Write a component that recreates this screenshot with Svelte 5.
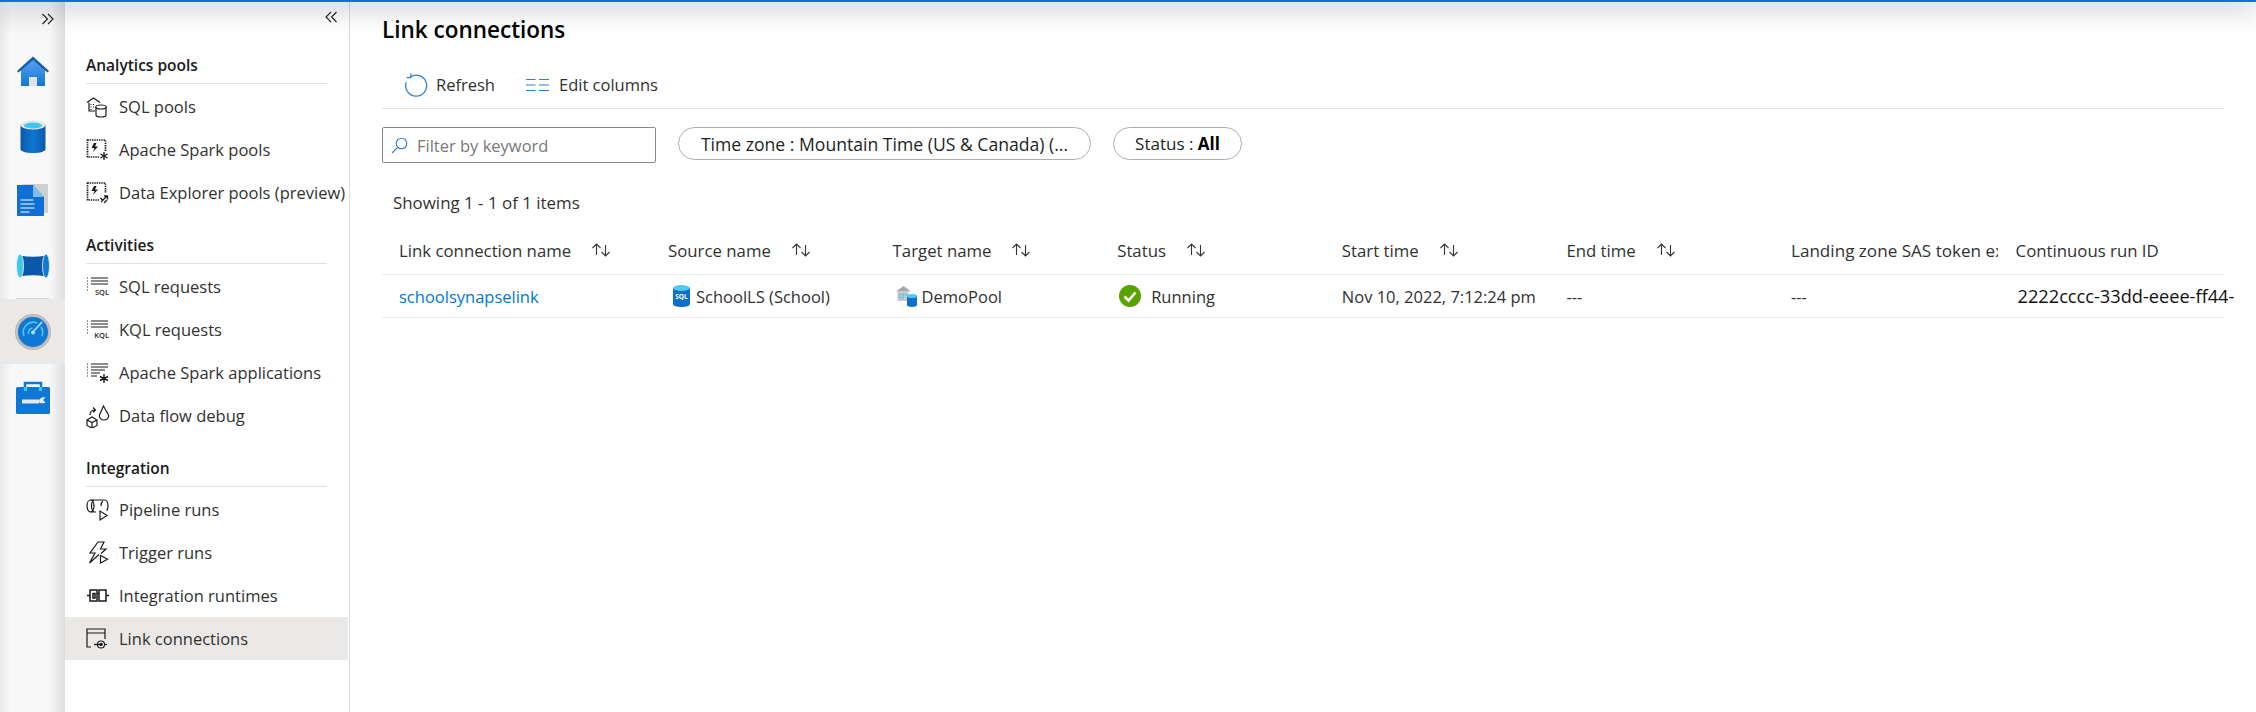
<script>
  const railIcons = ["home", "data", "doc", "pipe", "monitor", "tools"];

  const sections = [
    {
      title: "Analytics pools",
      items: [
        { label: "SQL pools", icon: "sqlpool" },
        { label: "Apache Spark pools", icon: "spark" },
        { label: "Data Explorer pools (preview)", icon: "explorer" }
      ]
    },
    {
      title: "Activities",
      items: [
        { label: "SQL requests", icon: "sqlreq" },
        { label: "KQL requests", icon: "kqlreq" },
        { label: "Apache Spark applications", icon: "sparkapp" },
        { label: "Data flow debug", icon: "dataflow" }
      ]
    },
    {
      title: "Integration",
      items: [
        { label: "Pipeline runs", icon: "piperun" },
        { label: "Trigger runs", icon: "trigger" },
        { label: "Integration runtimes", icon: "runtime" },
        { label: "Link connections", icon: "link", active: true }
      ]
    }
  ];

  const columns = [
    { name: "Link connection name", sort: true },
    { name: "Source name", sort: true },
    { name: "Target name", sort: true },
    { name: "Status", sort: true },
    { name: "Start time", sort: true },
    { name: "End time", sort: true },
    { name: "Landing zone SAS token expiry" },
    { name: "Continuous run ID" }
  ];
</script>

{#snippet navIcon(name)}
  <svg class="nav-icon" width="24" height="24" viewBox="0 0 24 24" fill="none" stroke="#1a1a1a" stroke-width="1.200">
    {#if name === "sqlpool"}
      <path d="M1 7.500 7.500 3l6.500 4.500M3 7.500V16h6" />
      <path d="M4.500 9.500h1M7 9.500h1M4.500 12h1M7 12h1M4.500 14.500h1" stroke-dasharray="1 1" />
      <path d="M10 12v8c0 1.200 2.400 2 5 2s5-.8 5-2v-8" fill="#fff" />
      <ellipse cx="15" cy="12" rx="5.200" ry="2" fill="#fff" />
    {:else if name === "spark" || name === "explorer"}
      <rect x="1.500" y="2" width="18" height="17" stroke-dasharray="1.400 .9" stroke-width="1.700" />
      <path d="M8 5l-2.500 5h3L7 14l5-5.500H9l1.500-3.500z" fill="#1a1a1a" stroke="none" />
      {#if name === "spark"}
        <rect x="14" y="13" width="9" height="10" fill="#fff" stroke="none" />
        <path d="M18 14v8M14.500 16l7 4M21.500 16l-7 4" stroke-width="1.300" />
      {:else}
        <rect x="13" y="12" width="10" height="11" fill="#fff" stroke="none" />
        <path d="M15 21l6-6M18 15h3.500v3.500M14.500 17l2.500 2.500M18 22l3-3" stroke-width="1.300" />
      {/if}
    {:else if name === "sqlreq" || name === "kqlreq"}
      <path d="M1 3h1M1 6h1M1 9h1M1 12h1M1 15h1" />
      <path d="M5 3h17M5 6h17M5 9h17" />
      <text x="23" y="20" text-anchor="end" class="mini">{name === "sqlreq" ? "SQL" : "KQL"}</text>
    {:else if name === "sparkapp"}
      <path d="M1 3h1M1 6h1M1 9h1M1 12h1M1 15h1" />
      <path d="M5 3h17M5 6h17M5 9h14M5 12h9M5 15h6" />
      <path d="M18 13v9M14 15.500l8 4M22 15.500l-8 4" stroke-width="1.400" />
    {:else if name === "dataflow"}
      <path d="M1 16l5-3 5 3v5.500L6 24l-5-2.500zM1 16l5 2.500L11 16M6 18.500V24" />
      <path d="M17.500 2l-4 9c-1 3 2 5 4.500 5s5.500-2 4.500-5z" />
      <path d="M4 11c0-3 2-5 5-5M7 3.500 9.500 6 7 8.500" />
    {:else if name === "piperun"}
      <ellipse cx="4.500" cy="8" rx="3.500" ry="6" />
      <path d="M4.500 2h14c2 0 3.500 2.500 3.500 6 0 2-.5 3.500-1.500 4.500M4.500 14H10M8 2c-2 1-2.500 3-2.500 6s1 5 2.500 6" />
      <path d="M17 3c-1.500 1-2 3-2 5M14 13v9l7-4.500z" fill="#fff" />
    {:else if name === "trigger"}
      <path d="M12 1 4 12h5L3.500 22 13 13.500" />
      <path d="M12 1h6l-3.500 7H20L15 12.500" />
      <path d="M14.500 14.500v7.500l7-3.700z" fill="#fff" />
    {:else if name === "runtime"}
      <path d="M1 11.500h3M20 11.500h3" stroke-width="1.500" />
      <path d="M4 7v10h7V9.500h2V17h7V6h-7v3M11 9.500V6H4v1M7 9.500h2V14H7z" stroke-width="1.500" />
    {:else}
      <path d="M1 2h18v4H1zM1 6v14h4M19 6v6" />
      <path d="M8 17.500h13" />
      <circle cx="15" cy="17.500" r="3.500" fill="#fff" />
      <circle cx="15" cy="17.500" r="1.200" fill="#1a1a1a" />
      <path d="M8 17.500h6" />
    {/if}
  </svg>
{/snippet}

{#snippet railIcon(name)}
  <svg width="36" height="36" viewBox="0 0 36 36">
    {#if name === "home"}
      <defs>
        <linearGradient id="homeFill" x1="0" y1="0" x2="0" y2="1">
          <stop offset="0" stop-color="#5ea0ef" /><stop offset="1" stop-color="#0f78d4" />
        </linearGradient>
      </defs>
      <path d="M6 16.500 18 6l12 10.500V33H6z" fill="url(#homeFill)" />
      <path d="M2 18 18 3.500 34 18l-1.500 1.500L18 7 3.500 19.500z" fill="#0f5fa8" />
      <rect x="14" y="24" width="8" height="9" fill="#dfe3e8" />
    {:else if name === "data"}
      <defs>
        <linearGradient id="dbFill" x1="0" y1="0" x2="1" y2="0">
          <stop offset="0" stop-color="#0b58a8" /><stop offset=".5" stop-color="#0f78d4" /><stop offset="1" stop-color="#0b58a8" />
        </linearGradient>
      </defs>
      <path d="M5.500 7v24c0 2.500 5.500 4 12.500 4s12.500-1.500 12.500-4V7z" fill="url(#dbFill)" />
      <ellipse cx="18" cy="7" rx="12.500" ry="4.500" fill="#e4e6e8" />
      <ellipse cx="18" cy="7.500" rx="9" ry="3" fill="#3fc6ec" />
    {:else if name === "doc"}
      <rect x="7" y="1" width="26" height="29" fill="#d0d0d0" />
      <path d="M2 2h16l11 12v19H2z" fill="#0f6fd8" />
      <path d="M18 2l11 12H18z" fill="#83bdf3" />
      <path d="M5.500 17h13M5.500 21h14M5.500 25h14M5.500 29h9" stroke="#a9d3f5" stroke-width="1.300" />
    {:else if name === "pipe"}
      <path d="M5 7.500Q18 10 31 7.500V28.500Q18 26 5 28.500z" fill="#0b58a8" />
      <ellipse cx="31" cy="18" rx="3.500" ry="12" fill="#0f78d4" stroke="#f0f4f8" stroke-width=".8" />
      <ellipse cx="5" cy="18" rx="3.500" ry="12" fill="#3fc6ec" stroke="#f0f4f8" stroke-width=".8" />
    {:else if name === "monitor"}
      <circle cx="18" cy="18" r="16.500" fill="#0f78d4" stroke="#b5b5b5" stroke-width="3" />
      <circle cx="18" cy="18" r="16.500" fill="none" stroke="#c9c9c9" stroke-width="1" />
      <path d="M9 22a10 10 0 0 1 13-13M26 13a10 10 0 0 1 1 9" fill="none" stroke="#50c8ef" stroke-width="1.600" />
      <path d="M13.500 20a5 5 0 0 1 4-6" fill="none" stroke="#50c8ef" stroke-width="1.600" />
      <path d="M18 18 27 8" stroke="#a5e4f7" stroke-width="1.800" />
      <circle cx="18" cy="18.500" r="2" fill="#a5e4f7" />
    {:else}
      <path d="M10 9V4h16v5" fill="none" stroke="#0f78d4" stroke-width="2.500" />
      <rect x="1" y="8" width="34" height="27" rx="1.500" fill="#0f78d4" />
      <rect x="9" y="8" width="3" height="4" fill="#3fc6ec" />
      <rect x="24" y="8" width="3" height="4" fill="#3fc6ec" />
      <path d="M7 20.500h17v4H7z" fill="#e8e8e8" />
      <path d="M24 22.500c0-3 3-5 6.500-4l-2.500 2.500 2.500 2.500c-3 1.500-6.500 1-6.500-1z" fill="#e8e8e8" />
    {/if}
  </svg>
{/snippet}

{#snippet sortIcon()}
  <svg class="sort" width="21" height="14" viewBox="0 0 21 14" fill="none" stroke="#333" stroke-width="1.100">
    <path d="M5.500 12V1.500M1.500 5 5.500 1l4 4" />
    <path d="M14.500 2v11M10.500 9l4 4 4-4" />
  </svg>
{/snippet}

<div class="page">
  <div class="topbar"></div>

  <nav class="rail">
    <div class="rail-toggle">
      <svg width="14" height="12" viewBox="0 0 14 12" fill="none" stroke="#222" stroke-width="1.100">
        <path d="M1.500 1l5 5-5 5M7 1l5 5-5 5" />
      </svg>
    </div>
    {#each railIcons as name}
      {#if name === "monitor"}<div class="rail-sep"></div>{/if}
      <div class="rail-item" class:selected={name === "monitor"}>
        {@render railIcon(name)}
      </div>
    {/each}
  </nav>

  <aside class="panel">
    <div class="panel-toggle">
      <svg width="14" height="12" viewBox="0 0 14 12" fill="none" stroke="#222" stroke-width="1.100">
        <path d="M7 1 2 6l5 5M12.500 1l-5 5 5 5" />
      </svg>
    </div>
    {#each sections as section}
      <section class="group">
        <h3>{section.title}</h3>
        <ul>
          {#each section.items as item}
            <li class:active={item.active}>
              {@render navIcon(item.icon)}
              <span>{item.label}</span>
            </li>
          {/each}
        </ul>
      </section>
    {/each}
  </aside>

  <main class="main">
    <h1>Link connections</h1>

    <div class="toolbar">
      <button class="tool refresh">
        <svg width="24" height="24" viewBox="0 0 24 24" fill="none" stroke="#2f7fd6" stroke-width="1.300">
          <path d="M6.500 3.800a10.500 10.500 0 1 1-4.300 5.500" />
          <path d="M6.800 .4v4.300H2.600" />
        </svg>
        Refresh
      </button>
      <button class="tool">
        <svg width="23" height="14" viewBox="0 0 23 14" fill="none" stroke="#2f7fd6" stroke-width="1.200">
          <path d="M0 1.500h9.500M0 7h9.500M0 12.500h9.500M13 1.500h10M13 7h10M13 12.500h10" />
        </svg>
        Edit columns
      </button>
    </div>

    <div class="filters">
      <div class="search">
        <svg width="17" height="17" viewBox="0 0 17 17" fill="none" stroke="#2f7fd6" stroke-width="1.100">
          <circle cx="10.500" cy="6.500" r="5.300" />
          <path d="M6.500 10.500 1 16" />
        </svg>
        <span>Filter by keyword</span>
      </div>
      <div class="pill tz"><span class="key">Time zone :</span> Mountain Time (US &amp; Canada) (...</div>
      <div class="pill status">Status : <b>All</b></div>
    </div>

    <p class="count">Showing 1 - 1 of 1 items</p>

    <div class="table">
      <div class="row head">
        {#each columns as col}
          <div class="cell">
            <span class="name">{col.name}</span>
            {#if col.sort}{@render sortIcon()}{/if}
          </div>
        {/each}
      </div>
      <div class="row body">
        <div class="cell"><span class="link">schoolsynapselink</span></div>
        <div class="cell source">
          <svg width="17" height="22" viewBox="0 0 17 22">
            <path d="M0 3v16c0 1.700 3.800 3 8.500 3s8.500-1.300 8.500-3V3z" fill="#0f6fc8" />
            <ellipse cx="8.500" cy="3" rx="8.500" ry="3" fill="#50c8ef" />
            <text x="8.500" y="14" text-anchor="middle" class="sql">SQL</text>
          </svg>
          SchoolLS (School)
        </div>
        <div class="cell target">
          <svg width="22" height="22" viewBox="0 0 22 22">
            <path d="M0 6.500 7.500 1 15 6.500z" fill="#a8a8a8" />
            <path d="M1.500 6.500h11V16h-11z" fill="#c8c8c8" />
            <path d="M3 8.500h2v2H3zM6 8.500h2v2H6zM9 8.500h2v2H9zM3 11.500h2v2H3zM6 11.500h2v2H6z" fill="#50c8ef" />
            <path d="M11 11v9c0 1.100 2.300 2 5 2s5-.9 5-2v-9z" fill="#0f6fc8" />
            <ellipse cx="16" cy="11" rx="5" ry="2" fill="#50c8ef" />
          </svg>
          DemoPool
        </div>
        <div class="cell state">
          <svg width="22" height="22" viewBox="0 0 22 22">
            <circle cx="11" cy="11" r="11" fill="#57a300" />
            <path d="M5.500 11.500 9.500 15.500 16.500 7.500" fill="none" stroke="#fff" stroke-width="2.600" />
          </svg>
          Running
        </div>
        <div class="cell">Nov 10, 2022, 7:12:24 pm</div>
        <div class="cell">---</div>
        <div class="cell">---</div>
        <div class="cell run-id">2222cccc-33dd-eeee-ff44-</div>
      </div>
    </div>
  </main>
</div>

<style>
  :global(body) {
    margin: 0;
    background: #fff;
  }

  .page {
    position: relative;
    display: flex;
    width: 2256px;
    height: 712px;
    overflow: hidden;
    font-family: "Open Sans", "Noto Sans", sans-serif;
    font-size: 16.5px;
    color: #323130;
  }

  .topbar {
    position: absolute;
    top: 0;
    left: 0;
    right: 0;
    height: 2px;
    background: #0078d4;
    box-shadow: 0 0 28px 4px rgba(0, 0, 0, 0.36);
    z-index: 5;
  }

  /* left icon rail */
  .rail {
    flex: 0 0 65px;
    background: linear-gradient(90deg, #e9e9e9 0, #f8f8f8 12px, #f8f8f8 50px, #dedede 65px);
  }

  .rail-toggle {
    height: 38px;
    display: flex;
    align-items: center;
    justify-content: flex-end;
    padding: 0 10px 0 0;
    box-sizing: border-box;
  }

  .rail-item {
    height: 65px;
    display: flex;
    align-items: center;
    justify-content: center;
  }

  .rail-item.selected {
    background: #ebe9e7;
  }

  .rail-sep {
    height: 1px;
    margin: 0 16px;
    background: #d6d6d6;
  }

  /* second level nav */
  .panel {
    flex: 0 0 285px;
    box-sizing: border-box;
    border-right: 1px solid #ddd;
    background: #fff;
  }

  .panel-toggle {
    height: 34px;
    padding-right: 11px;
    display: flex;
    justify-content: flex-end;
    align-items: center;
  }

  .group {
    margin: 12px 0;
  }

  h3 {
    margin: 0 22px 1px 21px;
    height: 38px;
    box-sizing: border-box;
    padding-top: 8px;
    border-bottom: 1px solid #e1dfdd;
    font-size: 15.5px;
    line-height: 22px;
    font-weight: 600;
    color: #1b1a19;
  }

  ul {
    list-style: none;
    margin: 0;
    padding: 0;
  }

  li {
    height: 43px;
    display: flex;
    align-items: center;
    gap: 9px;
    padding-left: 21px;
    margin-right: 1px;
    white-space: nowrap;
  }

  li.active {
    background: #ebe9e7;
  }

  .nav-icon {
    flex: none;
  }

  .mini {
    font-size: 7.5px;
    font-weight: 600;
    fill: #222;
    stroke: none;
  }

  /* content */
  .main {
    flex: 1;
    min-width: 0;
    padding: 0 32px;
  }

  h1 {
    margin: 0;
    padding-top: 11px;
    height: 49px;
    box-sizing: border-box;
    font-size: 22.5px;
    line-height: 38px;
    font-weight: 600;
    color: #000;
  }

  .toolbar {
    height: 60px;
    box-sizing: border-box;
    border-bottom: 1px solid #e1dfdd;
    display: flex;
    align-items: center;
    padding: 12px 0 0 22px;
    gap: 31px;
    margin-bottom: 18px;
  }

  .tool {
    display: flex;
    align-items: center;
    gap: 10px;
    border: 0;
    padding: 0;
    background: none;
    font: inherit;
    color: #323130;
  }

  .tool.refresh {
    gap: 8px;
  }

  .filters {
    display: flex;
    align-items: flex-start;
    gap: 22px;
  }

  .search {
    width: 274px;
    height: 36px;
    box-sizing: border-box;
    border: 1px solid #8a8886;
    border-radius: 2px;
    display: flex;
    align-items: center;
    gap: 9px;
    padding-left: 8px;
    color: #7a7876;
  }

  .pill {
    height: 33px;
    box-sizing: border-box;
    border: 1px solid #b0aeac;
    border-radius: 17px;
    display: flex;
    align-items: center;
    justify-content: center;
    white-space: pre;
    color: #201f1e;
  }

  .tz {
    width: 413px;
    font-size: 17.6px;
  }

  .key {
    font-weight: 500;
  }

  .status {
    width: 129px;
    font-size: 17px;
  }

  .status b {
    font-weight: 700;
    color: #000;
  }

  .count {
    margin: 27px 0 0 11px;
    height: 26px;
    line-height: 26px;
    font-size: 16.9px;
    color: #323130;
  }

  .table {
    margin-top: 14px;
  }

  .row {
    display: grid;
    grid-template-columns: 269px repeat(6, 224.6px) 225px;
    height: 43px;
    border-bottom: 1px solid #edebe9;
    box-sizing: border-box;
  }

  .row.head {
    height: 45px;
    font-size: 16.8px;
  }

  .cell {
    display: flex;
    align-items: center;
    padding-left: 17px;
    white-space: nowrap;
    min-width: 0;
    gap: 20px;
  }

  .head .cell {
    padding-bottom: 4px;
    overflow: hidden;
    margin-right: 17px;
    font-weight: 500;
  }

  .head .cell:nth-child(7) {
    margin-right: 1px;
    font-weight: 400;
    font-size: 17.1px;
  }

  .head .cell:last-child {
    padding-left: 17px;
    margin-right: 0;
    font-weight: 400;
  }

  .sort {
    flex: none;
  }

  .link {
    color: #0078d4;
  }

  .body .cell.source {
    gap: 6px;
    padding-left: 22px;
  }

  .body .cell.target {
    gap: 4px;
    padding-left: 20px;
  }

  .body .cell.state {
    gap: 10px;
    padding-left: 19px;
  }

  .sql {
    font-size: 6.5px;
    font-weight: 700;
    fill: #fff;
  }

  .run-id {
    color: #111;
    font-size: 18.2px;
    overflow: visible;
    padding-left: 19px;
  }
</style>
